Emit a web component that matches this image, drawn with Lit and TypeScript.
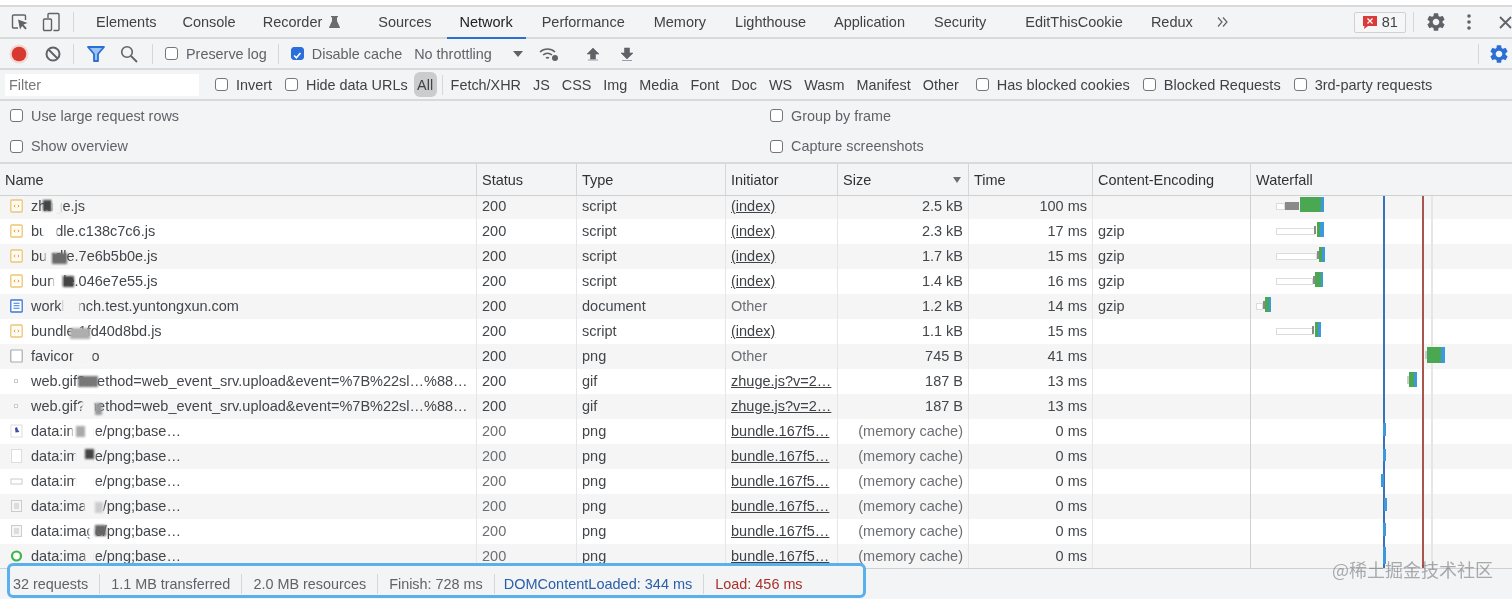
import { LitElement, html, css, svg } from "lit";
import { customElement } from "lit/decorators.js";

const GEAR = "M19.14 12.94c.04-.3.06-.61.06-.94 0-.32-.02-.64-.07-.94l2.03-1.58a.49.49 0 0 0 .12-.61l-1.92-3.32a.488.488 0 0 0-.59-.22l-2.39.96c-.5-.38-1.03-.7-1.62-.94l-.36-2.54a.484.484 0 0 0-.48-.41h-3.84c-.24 0-.43.17-.47.41l-.36 2.54c-.59.24-1.13.57-1.62.94l-2.39-.96c-.22-.08-.47 0-.59.22L2.74 8.87c-.12.21-.08.47.12.61l2.03 1.58c-.05.3-.09.63-.09.94s.02.64.07.94l-2.03 1.58a.49.49 0 0 0-.12.61l1.92 3.32c.12.22.37.29.59.22l2.39-.96c.5.38 1.03.7 1.62.94l.36 2.54c.05.24.24.41.48.41h3.84c.24 0 .44-.17.47-.41l.36-2.54c.59-.24 1.13-.56 1.62-.94l2.39.96c.22.08.47 0 .59-.22l1.92-3.32c.12-.22.07-.47-.12-.61l-2.01-1.58zM12 15.6c-1.98 0-3.6-1.62-3.6-3.6s1.62-3.6 3.6-3.6 3.6 1.62 3.6 3.6-1.62 3.6-3.6 3.6z";

const TABS: [string, number][] = [
  ["Elements", 0], ["Console", 26], ["Recorder", 27], ["Sources", 38], ["Network", 28], ["Performance", 29],
  ["Memory", 29], ["Lighthouse", 29], ["Application", 28], ["Security", 29], ["EditThisCookie", 39], ["Redux", 28],
];
const TYPES: [string, number][] = [
  ["Fetch/XHR", 0], ["JS", 12], ["CSS", 12], ["Img", 12], ["Media", 12], ["Font", 12], ["Doc", 12], ["WS", 12], ["Wasm", 12], ["Manifest", 12], ["Other", 12],
];

type Patch = [number, number, number, number, string];
type Seg = [number, number, number, number, string];
interface Row {
  icon: string; name: string; status: string; type: string; init: string; link: boolean; size: string; time: string; enc: string;
  patches: Patch[]; bars: Seg[]; dim?: boolean;
}
const W = "#fff", Z = "#f5f5f5";
const js = "script", IDX = "(index)", ZH = "zhuge.js?v=2…", BU = "bundle.167f5…", MEM = "(memory cache)", WEB = "web.gif?method=web_event_srv.upload&event=%7B%22sl…%88…";
const G = "#4aa852", B = "#3d98dc", GR = "#8a8a8a";
const box = (l: number, w: number): Seg => [l, 9, w, 7, "box"];
const ROWS: Row[] = [
  { icon: "js", name: "zhuge.js", status: "200", type: js, init: IDX, link: true, size: "2.5 kB", time: "100 ms", enc: "",
    patches: [[43, 6, 9, 11, "#444"], [52, 4, 10, 17, Z]],
    bars: [[26, 9, 9, 7, "box"], [35, 8, 14, 8, GR], [50, 3, 21, 15, G], [71, 3, 3, 15, B]] },
  { icon: "js", name: "bundle.c138c7c6.js", status: "200", type: js, init: IDX, link: true, size: "2.3 kB", time: "17 ms", enc: "gzip",
    patches: [[43, 3, 14, 19, W]],
    bars: [box(26, 39), [64, 7, 2, 8, GR], [67, 3, 3, 15, G], [70, 3, 4, 15, B]] },
  { icon: "js", name: "bundle.7e6b5b0e.js", status: "200", type: js, init: IDX, link: true, size: "1.7 kB", time: "15 ms", enc: "gzip",
    patches: [[45, 3, 8, 19, Z], [52, 9, 15, 11, "#6a6a6a"]],
    bars: [box(26, 41), [67, 7, 2, 8, GR], [69, 3, 3, 15, G], [72, 3, 3, 15, B]] },
  { icon: "js", name: "bundle.046e7e55.js", status: "200", type: js, init: IDX, link: true, size: "1.4 kB", time: "16 ms", enc: "gzip",
    patches: [[53, 3, 10, 19, W], [63, 7, 11, 11, "#444"]],
    bars: [box(26, 37), [63, 7, 2, 8, GR], [65, 3, 6, 15, G], [71, 3, 2, 15, B]] },
  { icon: "doc", name: "workbench.test.yuntongxun.com", status: "200", type: "document", init: "Other", link: false, size: "1.2 kB", time: "14 ms", enc: "gzip",
    patches: [[62, 3, 18, 19, Z]],
    bars: [box(6, 7), [13, 7, 2, 8, GR], [15, 3, 4, 15, G], [19, 3, 2, 15, B]] },
  { icon: "js", name: "bundle.1fd40d8bd.js", status: "200", type: js, init: IDX, link: true, size: "1.1 kB", time: "15 ms", enc: "",
    patches: [[70, 9, 20, 11, "#aeaeae"]],
    bars: [box(26, 37), [62, 7, 2, 8, GR], [65, 3, 3, 15, G], [68, 3, 3, 15, B]] },
  { icon: "blank", name: "favicon.ico", status: "200", type: "png", init: "Other", link: false, size: "745 B", time: "41 ms", enc: "",
    patches: [[73, 3, 19, 19, Z]],
    bars: [[175, 7, 2, 8, "#ccc"], [177, 3, 14, 16, G], [191, 3, 4, 16, B]] },
  { icon: "dot", name: WEB, status: "200", type: "gif", init: ZH, link: true, size: "187 B", time: "13 ms", enc: "",
    patches: [[78, 7, 20, 11, "#777"]],
    bars: [[157, 7, 2, 8, "#ccc"], [159, 3, 5, 15, G], [164, 3, 3, 15, B]] },
  { icon: "dot", name: WEB, status: "200", type: "gif", init: ZH, link: true, size: "187 B", time: "13 ms", enc: "",
    patches: [[82, 3, 13, 19, Z], [95, 9, 7, 12, "#999"]], bars: [] },
  { icon: "pic1", name: "data:image/png;base…", status: "200", type: "png", init: BU, link: true, size: MEM, time: "0 ms", enc: "", dim: true,
    patches: [[72, 3, 23, 19, W], [76, 7, 9, 11, "#aaa"]], bars: [[133, 4, 3, 13, B]] },
  { icon: "blank2", name: "data:image/png;base…", status: "200", type: "png", init: BU, link: true, size: MEM, time: "0 ms", enc: "", dim: true,
    patches: [[75, 3, 20, 19, Z], [85, 5, 9, 10, "#444"]], bars: [[133, 5, 3, 12, B]] },
  { icon: "wide", name: "data:image/png;base…", status: "200", type: "png", init: BU, link: true, size: MEM, time: "0 ms", enc: "", dim: true,
    patches: [[75, 3, 20, 19, W]], bars: [[131, 5, 3, 13, B]] },
  { icon: "grid", name: "data:image/png;base…", status: "200", type: "png", init: BU, link: true, size: MEM, time: "0 ms", enc: "", dim: true,
    patches: [[84, 3, 19, 19, Z], [95, 8, 8, 11, "#ccc"]], bars: [[134, 4, 3, 13, B]] },
  { icon: "grid", name: "data:image/png;base…", status: "200", type: "png", init: BU, link: true, size: MEM, time: "0 ms", enc: "", dim: true,
    patches: [[89, 3, 6, 19, W], [95, 6, 11, 11, "#666"]], bars: [[133, 4, 3, 13, B]] },
  { icon: "green", name: "data:image/png;base…", status: "200", type: "png", init: BU, link: true, size: MEM, time: "0 ms", enc: "", dim: true,
    patches: [[85, 3, 10, 19, Z]], bars: [[133, 3, 3, 17, B]] },
];

const ICONS: Record<string, unknown> = {
  js: svg`<rect x=".8" y="2" width="11.400" height="12" rx="1" fill="#fffdf6" stroke="#edc576" stroke-width="1.300"/><path d="M5.300 6.800 3.900 8l1.400 1.200M7.700 6.800 9.100 8 7.700 9.200" fill="none" stroke="#e8a83c"/>`,
  doc: svg`<rect x=".8" y="2" width="11.400" height="12" rx=".5" fill="#fff" stroke="#3b78d8" stroke-width="1.300"/><path d="M3.500 5.200h6M3.500 7.700h6M3.500 10.200h6" stroke="#3b78d8" stroke-width="1.100"/>`,
  blank: svg`<rect x=".8" y="2" width="11.400" height="12" rx=".5" fill="#fff" stroke="#aaa" stroke-width="1.200"/>`,
  dot: svg`<rect x="4.500" y="6.500" width="3" height="3" fill="#fff" stroke="#ccc"/>`,
  pic1: svg`<rect x="1" y="2" width="11" height="12" fill="#fff" stroke="#ddd"/><path d="M5 5l2-1 1 3 1.500 2-4 .5z" fill="#3c4fa8"/>`,
  blank2: svg`<rect x="1.500" y="1.500" width="10" height="13" fill="#fff" stroke="#ddd"/>`,
  wide: svg`<rect x="1" y="6" width="11" height="5" fill="#fff" stroke="#ccc"/>`,
  grid: svg`<rect x="1.500" y="2.500" width="10" height="11" fill="#f6f6f6" stroke="#ccc"/><rect x="4" y="5" width="5" height="6" fill="#ddd"/>`,
  green: svg`<circle cx="6.500" cy="8" r="4.500" fill="#fff" stroke="#3cb54a" stroke-width="2.200"/>`,
};

@customElement("app-root")
export class AppRoot extends LitElement {
  static styles = css`
    :host { display: flex; flex-direction: column; height: 599px; overflow: hidden; position: relative;
      font: 14.5px "Liberation Sans", Arial, sans-serif; color: #3f4347; background: #f3f4f6; filter: blur(0.35px); }
    .top { height: 5px; background: #fff; flex: none; }
    .bar { display: flex; align-items: center; flex: none; box-sizing: border-box; border-bottom: 2px solid #d8d9db; white-space: nowrap; }
    .tabs { height: 34px; border-top: 2px solid #d8d9db; }
    .tb { height: 31px; font-size: 14.4px; }
    .fl { height: 31px; font-size: 14.4px; }
    .fl .lab.wide { font-size: 14.5px; }
    .opts { height: 63px; font-size: 14.4px; display: grid; grid-template-columns: 760px 1fr; grid-auto-rows: 30.5px; padding: 0 0 1px 10px; align-content: center; box-sizing: border-box; border-bottom: 2px solid #d8d9db; flex: none; color: #5f6368; }
    .ic { display: block; flex: none; }
    .sep { width: 1px; height: 20px; background: #d6d7d9; flex: none; }
    .tab { position: relative; height: 100%; display: flex; align-items: center; }
    .tab.on { color: #202124; }
    .tab.on::after { content: ""; position: absolute; left: -13px; right: -13px; bottom: -2px; height: 2px; background: #2b6fd6; }
    .badge { display: flex; align-items: center; gap: 5px; box-sizing: border-box; width: 52px; height: 21px; margin-left: 125px; padding-left: 8px; background: #f6f6f7; border: 1px solid #d0d1d3; border-radius: 2px; }
    .cb { width: 13px; height: 13px; box-sizing: border-box; border: 1px solid #767676; border-radius: 3px; background: #fff; flex: none; display: block; }
    .cb.on { background: #2a6fdb; border-color: #2a6fdb; position: relative; }
    .lab { display: flex; align-items: center; gap: 8px; color: #5f6368; }
    .fl .lab { color: #3f4347; }
    .filter { width: 194px; height: 22px; margin-left: 5px; background: #fff; color: #777; padding-left: 4px; box-sizing: border-box; display: flex; align-items: center; flex: none; }
    .all { background: #cbccce; border-radius: 6px; width: 23px; height: 25px; display: flex; align-items: center; justify-content: center; flex: none; margin-left: 6px; }
    .grid { display: grid; grid-template-columns: 477px 100px 149px 112px 131px 124px 158px 1fr; }
    .head { height: 32px; flex: none; box-sizing: border-box; border-bottom: 1px solid #cfd0d2; background: #f3f4f6; color: #303336; }
    .head > div { display: flex; align-items: center; padding: 1px 5px 0; border-right: 1px solid #d5d6d8; position: relative; }
    .head > div:last-child { border: 0; }
    .caret { position: absolute; right: 7px; top: 13px; width: 0; height: 0; border: 4.5px solid transparent; border-top: 6px solid #6e6e6e; border-bottom: 0; }
    .list { flex: 1; min-height: 0; overflow: hidden; position: relative; background: #fff; }
    .rows { margin-top: -2.5px; }
    .row { height: 25px; position: relative; background: #fff; }
    .row:nth-child(odd) { background: #f5f5f5; }
    .c { display: flex; align-items: center; padding: 0 5px; border-right: 1px solid #e6e6e6; white-space: nowrap; overflow: hidden; min-width: 0; box-sizing: border-box; color: #43474b; }
    .c.r { justify-content: flex-end; }
    .c.name { gap: 8px; padding-left: 10px; }
    .c.dim { color: #6c6f73; }
    .c.wf { border: 0; padding: 0; overflow: visible; border-left: 1px solid #cfcfcf; margin-left: -1px; position: relative; }
    .link { text-decoration: underline; text-underline-offset: 1px; color: #3f4347; }
    .patch { position: absolute; display: block; filter: blur(1px); }
    .seg { position: absolute; display: block; z-index: 2; }
    .seg.box { background: #fff; border: 1.5px solid #dcdcdc; box-sizing: border-box; }
    .vl { position: absolute; top: 0; bottom: 0; z-index: 1; }
    .foot { height: 31px; flex: none; font-size: 14.4px; box-sizing: border-box; border-top: 1px solid #cfd0d2; background: #f3f4f6; padding-left: 7px; display: flex; align-items: flex-start; }
    .sum { position: relative; z-index: 3; margin-top: -6px; box-sizing: border-box; width: 859px; height: 35px; border: 3px solid #5ab0ea; border-radius: 6px; background: #f3f4f6; display: flex; align-items: center; padding: 6px 0 0 3px; gap: 11px; white-space: nowrap; color: #5f6368; }
    .sum .sep { height: 20px; }
    .blue { color: #2a5fa8; margin-left: -2px; font-size: 14.5px; }
    .red { color: #a8302a; }
    .mark { position: absolute; z-index: 4; right: 19px; bottom: 17px; font: 18px "Noto Sans CJK SC", sans-serif; color: rgba(90, 95, 100, 0.5); white-space: nowrap; }
  `;

  private cb(label: string, on = false, left = 0, wide = false) {
    return html`<label class=${wide ? "lab wide" : "lab"} style=${left ? `margin-left:${left}px` : ""}><span class=${on ? "cb on" : "cb"}>${on
      ? html`<svg viewBox="0 0 13 13" width="11" height="11"><path d="M2.500 6.500 5.200 9.200 10 3.600" fill="none" stroke="#fff" stroke-width="2"/></svg>` : ""}</span>${label}</label>`;
  }

  render() {
    return html`
      <div class="top"></div>
      <div class="bar tabs">
        <svg class="ic" style="margin-left:11px" width="18" height="18" viewBox="0 0 18 18"><path d="M7 15H2.500a1 1 0 0 1-1-1V3a1 1 0 0 1 1-1h11a1 1 0 0 1 1 1v4" fill="none" stroke="#5f6368" stroke-width="1.400"/><path d="M7 6.500 16.500 10l-4 1.600 3.200 3.600-1.400 1.300-3.200-3.600L9 16.500z" fill="#5f6368"/></svg>
        <svg class="ic" style="margin-left:13px" width="19" height="20" viewBox="0 0 19 20"><path d="M6 6V2.500a1 1 0 0 1 1-1h9a1 1 0 0 1 1 1v15a1 1 0 0 1-1 1h-4.500" fill="none" stroke="#5f6368" stroke-width="1.400"/><rect x="1.500" y="7" width="8" height="11.500" rx="1" fill="none" stroke="#5f6368" stroke-width="1.400"/></svg>
        <div class="sep" style="margin-left:12px;margin-right:22px"></div>
        ${TABS.map(([t, m]) => html`<div class=${t === "Network" ? "tab on" : "tab"} style="margin-left:${m}px">${t}${t === "Recorder"
          ? html`<svg class="ic" style="margin-left:7px" width="11" height="12" viewBox="0 0 11 12"><path d="M2 0h7v1.200H8V5l3 6.500a.4.4 0 0 1-.4.500H.4a.4.4 0 0 1-.4-.5L3 5V1.200H2z" fill="#6a6d70"/></svg>` : ""}</div>`)}
        <svg class="ic" style="margin-left:24px" width="12" height="12" viewBox="0 0 12 12"><path d="M1 1.500 5 6l-4 4.500M6 1.500 10 6l-4 4.500" fill="none" stroke="#5f6368" stroke-width="1.200"/></svg>
        <div class="badge"><svg class="ic" width="14" height="14" viewBox="0 0 14 14"><path d="M0 1h14v10H5l-4 3 .5-3H0z" fill="#d93a3a"/><path d="M4.500 3.500l5 5m0-5-5 5" stroke="#fff" stroke-width="1.200"/></svg>81</div>
        <div class="sep" style="margin-left:7px"></div>
        <svg class="ic" style="margin-left:11px" width="22" height="22" viewBox="0 0 24 24"><path d=${GEAR} fill="#5f6368"/></svg>
        <svg class="ic" style="margin-left:20px" width="4" height="16" viewBox="0 0 4 16"><circle cx="2" cy="2" r="1.800" fill="#5f6368"/><circle cx="2" cy="8" r="1.800" fill="#5f6368"/><circle cx="2" cy="14" r="1.800" fill="#5f6368"/></svg>
        <svg class="ic" style="margin-left:28px" width="13" height="13" viewBox="0 0 13 13"><path d="M1 1l11 11M12 1 1 12" stroke="#5f6368" stroke-width="1.800"/></svg>
      </div>
      <div class="bar tb">
        <svg class="ic" style="margin-left:9px" width="20" height="20" viewBox="0 0 20 20"><circle cx="10" cy="10" r="9.500" fill="#f4d5d2"/><circle cx="10" cy="10" r="7.300" fill="#d8392e"/></svg>
        <svg class="ic" style="margin-left:16px" width="16" height="16" viewBox="0 0 16 16"><circle cx="8" cy="8" r="6.500" fill="none" stroke="#5f6368" stroke-width="2"/><path d="M3.500 3.500l9 9" stroke="#5f6368" stroke-width="2"/></svg>
        <div class="sep" style="margin-left:12px"></div>
        <svg class="ic" style="margin-left:13px" width="18" height="16" viewBox="0 0 18 16"><path d="M1 1h16l-6 7v7H7V8z" fill="#9cc3f5" stroke="#2b6fd6" stroke-width="1.800" stroke-linejoin="round"/></svg>
        <svg class="ic" style="margin-left:15px" width="18" height="18" viewBox="0 0 18 18"><circle cx="7" cy="7" r="5.300" fill="none" stroke="#5f6368" stroke-width="1.600"/><path d="M11 11l6 6" stroke="#5f6368" stroke-width="1.800"/></svg>
        <div class="sep" style="margin-left:14px"></div>
        ${this.cb("Preserve log", false, 12)}
        <div class="sep" style="margin-left:11px"></div>
        ${this.cb("Disable cache", true, 12)}
        <span style="margin-left:12px;color:#5f6368">No throttling</span>
        <span style="margin-left:21px;width:0;height:0;border:5px solid transparent;border-top:6px solid #5f6368;border-bottom:0"></span>
        <svg class="ic" style="margin-left:16px" width="20" height="16" viewBox="0 0 20 16"><path d="M1 6a11 11 0 0 1 15 0M4 9a7 7 0 0 1 9 0M7 12a3 3 0 0 1 3 0" fill="none" stroke="#5f6368" stroke-width="1.600"/><circle cx="16" cy="12" r="3" fill="#5f6368"/></svg>
        <svg class="ic" style="margin-left:27px" width="14" height="14" viewBox="0 0 14 14"><path d="M7 1 13 7H9.500v5h-5V7H1zM2 13h10" fill="#5f6368" stroke="#5f6368" stroke-width=".6"/></svg>
        <svg class="ic" style="margin-left:20px" width="14" height="14" viewBox="0 0 14 14"><path d="M4.500 1h5v5H13L7 12 1 6h3.500zM2 13.500h10" fill="#5f6368" stroke="#5f6368" stroke-width=".6"/></svg>
        <div class="sep" style="margin-left:844px"></div>
        <svg class="ic" style="margin-left:9px" width="22" height="22" viewBox="0 0 24 24"><path d=${GEAR} fill="#2b6fd6"/></svg>
      </div>
      <div class="bar fl">
        <div class="filter">Filter</div>
        ${this.cb("Invert", false, 16)}
        ${this.cb("Hide data URLs", false, 13)}
        <div class="all">All</div>
        <div class="sep" style="margin-left:5px;margin-right:8px"></div>
        ${TYPES.map(([t, m]) => html`<span style="margin-left:${m}px">${t}</span>`)}
        ${this.cb("Has blocked cookies", false, 17, true)}
        ${this.cb("Blocked Requests", false, 13, true)}
        ${this.cb("3rd-party requests", false, 13, true)}
      </div>
      <div class="opts">
        ${this.cb("Use large request rows")}${this.cb("Group by frame")}
        ${this.cb("Show overview")}${this.cb("Capture screenshots")}
      </div>
      <div class="grid head">
        <div>Name</div><div>Status</div><div>Type</div><div>Initiator</div>
        <div>Size<span class="caret"></span></div><div>Time</div><div>Content-Encoding</div><div>Waterfall</div>
      </div>
      <div class="list">
        <div class="rows">
          ${ROWS.map((r) => html`
            <div class="grid row">
              <div class="c name"><svg class="ic" width="13" height="16" viewBox="0 0 13 16" aria-hidden="true">${ICONS[r.icon]}</svg><span>${r.name}</span>
                ${r.patches.map((p) => html`<i class="patch" style="left:${p[0]}px;top:${p[1]}px;width:${p[2]}px;height:${p[3]}px;background:${p[4]}"></i>`)}</div>
              <div class=${r.dim ? "c dim" : "c"}>${r.status}</div>
              <div class="c">${r.type}</div>
              <div class=${r.init === "Other" ? "c dim" : "c"}>${r.link ? html`<span class="link">${r.init}</span>` : r.init}</div>
              <div class=${r.dim ? "c r dim" : "c r"}>${r.size}</div>
              <div class="c r">${r.time}</div>
              <div class="c">${r.enc}</div>
              <div class="c wf">${r.bars.map((b) => b[4] === "box"
                ? html`<i class="seg box" style="left:${b[0] - 1}px;top:${b[1]}px;width:${b[2]}px;height:${b[3]}px"></i>`
                : html`<i class="seg" style="left:${b[0] - 1}px;top:${b[1]}px;width:${b[2]}px;height:${b[3]}px;background:${b[4]}"></i>`)}</div>
            </div>`)}
        </div>
        <div class="vl" style="left:1383px;width:2px;background:#3872b8"></div>
        <div class="vl" style="left:1422px;width:2px;background:#a9544c"></div>
        <div class="vl" style="left:1431px;width:2px;background:#e6e6e6"></div>
      </div>
      <div class="foot">
        <div class="sum">
          <span>32 requests</span><div class="sep"></div>
          <span>1.1 MB transferred</span><div class="sep"></div>
          <span>2.0 MB resources</span><div class="sep"></div>
          <span>Finish: 728 ms</span><div class="sep"></div>
          <span class="blue">DOMContentLoaded: 344 ms</span><div class="sep"></div>
          <span class="red">Load: 456 ms</span>
        </div>
      </div>
      <div class="mark">@稀土掘金技术社区</div>
    `;
  }
}
